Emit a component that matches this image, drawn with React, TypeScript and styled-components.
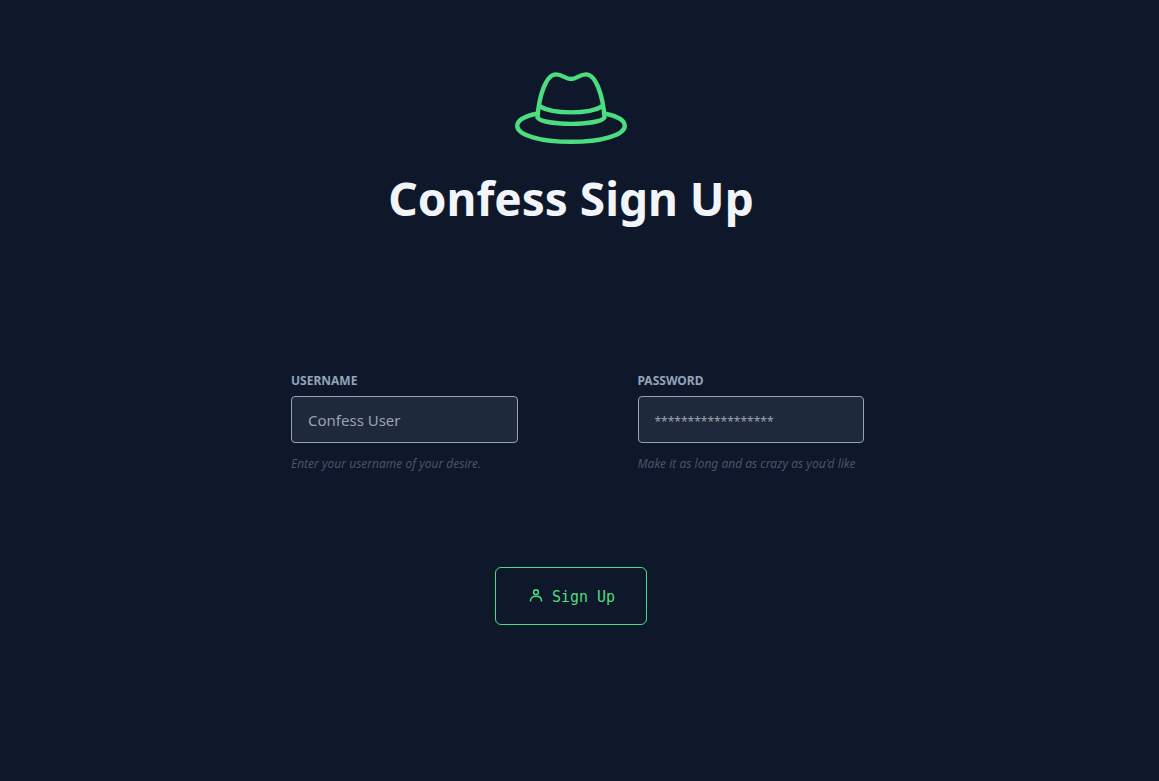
import React from "react";
import styled, { createGlobalStyle } from "styled-components";

const GlobalStyle = createGlobalStyle`
  *, *::before, *::after { box-sizing: border-box; }
  body {
    margin: 0;
    background: #0f172a;
    color: #f1f5f9;
    font-family: "Segoe UI", "Noto Sans", sans-serif;
  }
`;

const Page = styled.main`
  display: flex;
  flex-direction: column;
  align-items: center;
  min-height: 100vh;
  padding: 72px 17px 72px 0;
`;

const Hat = styled.svg`
  display: block;
  width: 112px;
  height: 72px;
  fill: none;
  stroke: #4ade80;
  stroke-width: 4.4;
  stroke-linecap: round;
  stroke-linejoin: round;
`;

const Title = styled.h1`
  margin: 30px 0 0;
  font-size: 46px;
  line-height: 48px;
  font-weight: 700;
`;

const Form = styled.form`
  display: flex;
  flex-direction: column;
  align-items: center;
  width: 100%;
  margin-top: 151px;
`;

const Fields = styled.div`
  display: grid;
  grid-template-columns: 1fr 1fr;
  gap: 120px;
  width: 100%;
  max-width: 586px;
  padding-left: 13px;
`;

const Field = styled.div`
  display: flex;
  flex-direction: column;
`;

const Label = styled.label`
  margin-bottom: 7px;
  color: #94a3b8;
  font-size: 12px;
  line-height: 16px;
  font-weight: 700;
  text-transform: uppercase;
`;

const Input = styled.input<{ $placeholderSize: number }>`
  width: 100%;
  height: 47px;
  padding: 0 16px;
  border: 1px solid #94a3b8;
  border-radius: 4px;
  background: #1e293b;
  color: #e2e8f0;
  font-family: inherit;
  font-size: 15px;
  &::placeholder {
    color: #9ca3af;
    opacity: 1;
    font-size: ${({ $placeholderSize }) => $placeholderSize}px;
  }
`;

const Hint = styled.p`
  margin: 12px 0 0;
  color: #475569;
  font-size: 12px;
  line-height: 18px;
  font-style: italic;
  white-space: nowrap;
`;

const SubmitButton = styled.button`
  display: flex;
  align-items: center;
  justify-content: center;
  gap: 8px;
  height: 58px;
  margin-top: 94px;
  padding: 2px 31px 0 32px;
  border: 1px solid #4ade80;
  border-radius: 6px;
  background: transparent;
  color: #4ade80;
  font-family: Consolas, "DejaVu Sans Mono", monospace;
  font-size: 15px;
  line-height: 24px;
  cursor: pointer;
`;

const UserIcon = styled.svg`
  width: 16px;
  height: 16px;
  fill: none;
  stroke: currentColor;
  stroke-width: 1.5;
`;

export default function App() {
  return (
    <>
      <GlobalStyle />
      <Page>
        <Hat viewBox="0 0 112 72" aria-hidden="true">
          <path d="M22.5 41.5C10 44 2.2 48 2.2 54C2.2 63 26 69.8 56 69.8S109.8 63 109.8 54C109.8 48 102 44 89.5 41.5" />
          <path d="M22.5 45.5C24 24 31 2.4 41 2.4C48 2.4 50 7 56 7S64 2.4 71 2.4C81 2.4 88 24 89.5 45.5C83 54 29 54 22.5 45.5Z" />
          <path d="M25 34.5C38 42.3 74 42.3 87 34.5" />
        </Hat>
        <Title>Confess Sign Up</Title>
        <Form onSubmit={(event) => event.preventDefault()}>
          <Fields>
            <Field>
              <Label htmlFor="username">Username</Label>
              <Input id="username" type="text" placeholder="Confess User" $placeholderSize={15} />
              <Hint>Enter your username of your desire.</Hint>
            </Field>
            <Field>
              <Label htmlFor="password">Password</Label>
              <Input id="password" type="password" placeholder="******************" $placeholderSize={12} />
              <Hint>Make it as long and as crazy as you'd like</Hint>
            </Field>
          </Fields>
          <SubmitButton type="submit">
            <UserIcon viewBox="0 0 16 16" aria-hidden="true">
              <circle cx="8" cy="3.2" r="2.4" />
              <path d="M2.5 12.6V11.9C2.5 9.1 4.8 7.3 8 7.3S13.5 9.1 13.5 11.9V12.6" />
            </UserIcon>
            Sign Up
          </SubmitButton>
        </Form>
      </Page>
    </>
  );
}
